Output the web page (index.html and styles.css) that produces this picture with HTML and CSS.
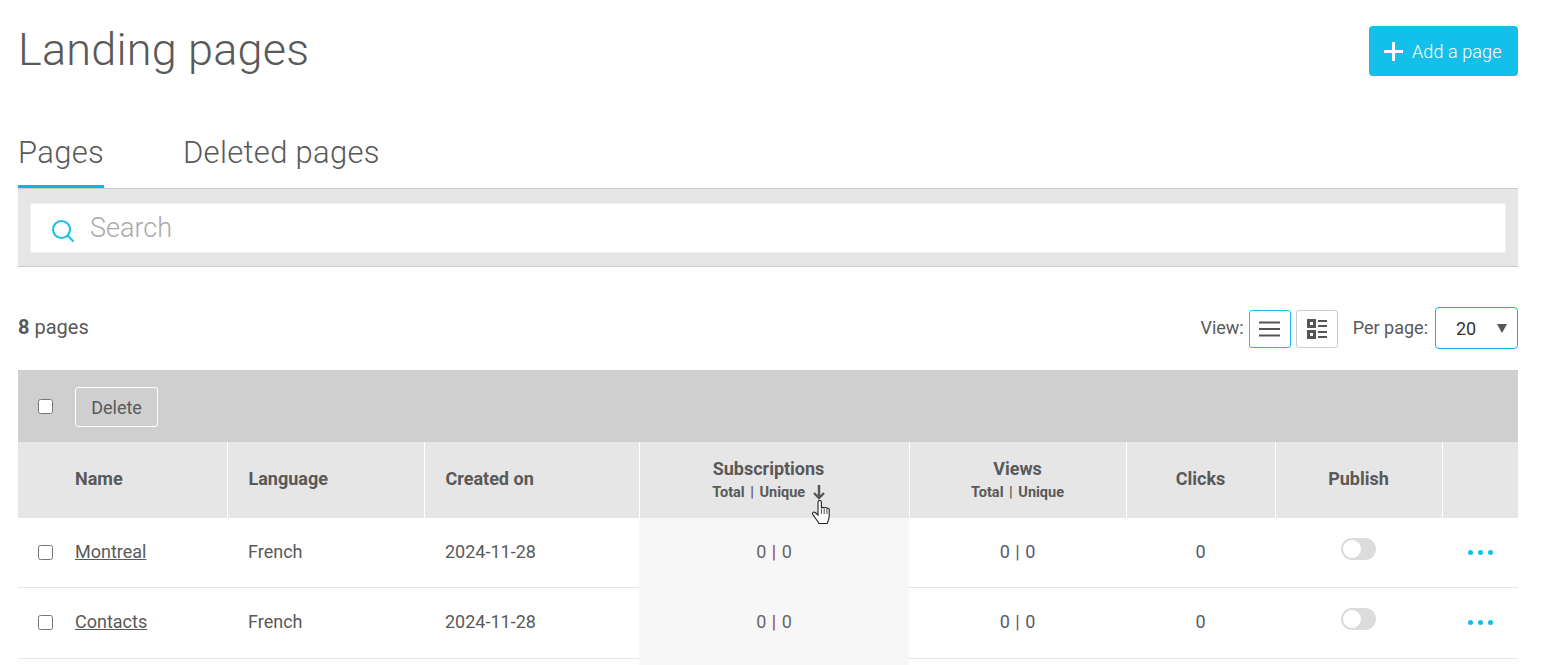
FILE: index.html
```html
<!DOCTYPE html>
<html lang="en">
<head>
    <meta charset="UTF-8">
    <meta name="viewport" content="width=device-width, initial-scale=1.0">
    <link rel="stylesheet" href="styles.css">
    <title>Landing pages</title>
</head>
<body>
    <div class="page">
        <header class="top">
            <h1>Landing pages</h1>
            <a class="add-btn">
                <svg width="19" height="19" viewBox="0 0 19 19"><path d="M9.500 0v19M0 9.500h19" stroke="#fff" stroke-width="3" fill="none"/></svg>
                <span>Add a page</span>
            </a>
        </header>

        <nav class="tabs">
            <a class="tab active">Pages</a>
            <a class="tab">Deleted pages</a>
        </nav>

        <div class="search-bar">
            <div class="search-box">
                <svg width="24" height="24" viewBox="0 0 24 24"><circle cx="10.500" cy="10.500" r="8.500" stroke="#13c0ea" stroke-width="2" fill="none"/><path d="M16.500 16.500l6 6" stroke="#13c0ea" stroke-width="2" fill="none"/></svg>
                <span class="placeholder">Search</span>
            </div>
        </div>

        <div class="list-head">
            <div class="count"><b>8</b> pages</div>
            <div class="view-tools">
                <span class="tool-label">View:</span>
                <div class="view-btn selected">
                    <svg width="21" height="16" viewBox="0 0 21 16"><path d="M0 1.500h21M0 8h21M0 14.500h21" stroke="#555" stroke-width="2" fill="none"/></svg>
                </div>
                <div class="view-btn">
                    <svg width="20" height="20" viewBox="0 0 20 20"><path d="M1.500 1.500h6v6h-6zM1.500 12.500h6v6h-6z" stroke="#555" stroke-width="3" fill="none"/><path d="M11 2h9M11 7h9M11 13h9M11 18h9" stroke="#555" stroke-width="2" fill="none"/></svg>
                </div>
                <span class="tool-label per-label">Per page:</span>
                <div class="per-select"><span>20</span><i class="caret"></i></div>
            </div>
        </div>

        <div class="bulk-bar">
            <input type="checkbox" class="check">
            <button class="delete-btn">Delete</button>
        </div>

        <table class="pages-table">
            <colgroup>
                <col class="c-name"><col class="c-lang"><col class="c-date"><col class="c-subs"><col class="c-views"><col class="c-clicks"><col class="c-pub"><col class="c-more">
            </colgroup>
            <thead>
                <tr>
                    <th class="left name-cell">Name</th>
                    <th class="left">Language</th>
                    <th class="left">Created on</th>
                    <th class="two-line sort-col">Subscriptions<small>Total | Unique
                        <svg class="sort-arrow" width="12" height="15" viewBox="0 0 12 15"><path d="M6 0v13M1 8l5 5 5-5" stroke="#555" stroke-width="2.400" fill="none"/></svg></small>
                        <svg class="hand" width="18" height="24" viewBox="0 0 18 24"><path d="M6 2.200c0-2.300 3.400-2.300 3.400 0V8.500c0-1.500 2.800-1.500 2.800 0 0-1.300 2.700-1.300 2.700.3 0-1 2.300-.9 2.300.7V16c0 3-1 5-2 7.500H7C5.500 21 2.500 17 .8 14.500c-1-1.800 1-3.200 2.400-2L6 15z" fill="#fff" stroke="#222" stroke-width="1.100"/><path d="M9.400 9v5M12.200 9v5M14.900 9v5" stroke="#222" stroke-width=".8" fill="none"/></svg>
                    </th>
                    <th class="two-line">Views<small>Total | Unique</small></th>
                    <th>Clicks</th>
                    <th>Publish</th>
                    <th></th>
                </tr>
            </thead>
            <tbody>
                <tr>
                    <td class="left name-cell"><input type="checkbox" class="check"><a class="page-link">Montreal</a></td>
                    <td class="left">French</td>
                    <td class="left">2024-11-28</td>
                    <td class="sorted">0 <em>|</em> 0</td>
                    <td class="num">0 | 0</td>
                    <td class="num">0</td>
                    <td><span class="toggle"></span></td>
                    <td><span class="dots"><i></i><i></i><i></i></span></td>
                </tr>
                <tr class="row-tall">
                    <td class="left name-cell"><input type="checkbox" class="check"><a class="page-link">Contacts</a></td>
                    <td class="left">French</td>
                    <td class="left">2024-11-28</td>
                    <td class="sorted">0 <em>|</em> 0</td>
                    <td class="num">0 | 0</td>
                    <td class="num">0</td>
                    <td><span class="toggle"></span></td>
                    <td><span class="dots"><i></i><i></i><i></i></span></td>
                </tr>
                <tr class="row-stub">
                    <td></td>
                    <td></td>
                    <td></td>
                    <td class="sorted"></td>
                    <td></td>
                    <td></td>
                    <td></td>
                    <td></td>
                </tr>
            </tbody>
        </table>
    </div>
</body>
</html>
```

FILE: styles.css
```css
html, body {
    margin: 0;
    height: 665px;
    overflow: hidden;
}
body {
    background-color: #fff;
    color: #595959;
    font-family: "Roboto", sans-serif;
    font-size: 18px;
}
.page {
    width: 1500px;
    margin-left: 18px;
}

/* title row */
.top {
    display: flex;
    justify-content: space-between;
    align-items: flex-start;
    padding-top: 26px;
    height: 100px;
    box-sizing: border-box;
}
h1 {
    margin: 0;
    font-size: 45px;
    letter-spacing: .2px;
    line-height: 48px;
    font-weight: 300;
}
.add-btn {
    display: flex;
    align-items: center;
    gap: 9px;
    height: 50px;
    width: 149px;
    box-sizing: border-box;
    padding-left: 15px;
    background-color: #13c0ea;
    color: #fff;
    border-radius: 4px;
    font-weight: 300;
    letter-spacing: .1px;
}

/* tabs */
.tabs {
    display: flex;
    gap: 79px;
    height: 88px;
    box-sizing: border-box;
    padding-top: 32px;
}
.tab {
    font-size: 31px;
    letter-spacing: .3px;
    font-weight: 300;
    line-height: 42px;
    height: 56px;
    box-sizing: border-box;
}
.tab.active {
    border-bottom: 3px solid #13b5dc;
}

/* search */
.search-bar {
    background-color: #e6e6e6;
    border-top: 1px solid #ccc;
    border-bottom: 1px solid #ccc;
    padding: 14px 12px 13px 12px;
}
.search-box {
    display: flex;
    align-items: center;
    gap: 15px;
    height: 50px;
    box-sizing: border-box;
    padding-left: 20px;
    border: 1px solid #f2f2f2;
    background-color: #fff;
}
.search-box svg {
    margin-top: 6px;
}
.placeholder {
    font-size: 27px;
    font-weight: 300;
    color: #aaa;
}

/* count and view options */
.list-head {
    display: flex;
    justify-content: space-between;
    align-items: center;
    height: 103px;
    padding-top: 19px;
    box-sizing: border-box;
}
.count {
    font-size: 20px;
    margin-bottom: 2px;
}
.count b {
    font-weight: 700;
}
.view-tools {
    display: flex;
    align-items: center;
    gap: 5px;
}
.tool-label {
    margin-bottom: 2px;
}
.view-btn {
    display: flex;
    align-items: center;
    justify-content: center;
    width: 42px;
    height: 38px;
    margin-top: 2px;
    box-sizing: border-box;
    border: 1px solid #ccc;
    border-radius: 3px;
}
.view-btn.selected {
    border-color: #13c0ea;
}
.per-label {
    margin-left: 10px;
}
.per-select {
    display: flex;
    align-items: center;
    justify-content: space-between;
    width: 83px;
    height: 42px;
    margin-left: 2px;
    box-sizing: border-box;
    padding: 0 10px 0 20px;
    border: 1px solid #13b5dc;
    border-radius: 4px;
    color: #333;
}
.caret {
    width: 0;
    height: 0;
    border-left: 5px solid transparent;
    border-right: 5px solid transparent;
    border-top: 9px solid #555;
}

/* bulk actions */
.bulk-bar {
    display: flex;
    align-items: center;
    height: 72px;
    padding-left: 20px;
    background-color: #cfcfcf;
    box-sizing: border-box;
}
.check {
    width: 15px;
    height: 15px;
    margin: 0;
    flex: none;
    vertical-align: -2px;
}
.delete-btn {
    margin-left: 22px;
    margin-top: 2px;
    width: 83px;
    height: 40px;
    background: transparent;
    border: 1px solid #fff;
    border-radius: 3px;
    color: #595959;
    font-family: "Roboto", sans-serif;
    font-size: 18px;
    padding: 0;
}

/* table */
.pages-table {
    width: 1500px;
    table-layout: fixed;
    border-collapse: collapse;
}
.c-name { width: 209px; }
.c-lang { width: 197px; }
.c-date { width: 215px; }
.c-subs { width: 270px; }
.c-views { width: 217px; }
.c-clicks { width: 149px; }
.c-pub { width: 167px; }
.c-more { width: 76px; }
th {
    position: relative;
    height: 76px;
    box-sizing: border-box;
    padding: 0 0 3px 0;
    background-color: #e6e6e6;
    border-left: 1px solid #fff;
    font-weight: 700;
    font-size: 18px;
    text-align: center;
}
th:first-child {
    border-left: 0;
}
th.two-line {
    padding-bottom: 1px;
}
th.sort-col {
    padding-right: 11px;
}
th small {
    display: block;
    font-size: 14.500px;
    font-weight: 700;
    word-spacing: 2px;
    margin-top: 5px;
}
td {
    height: 69px;
    padding: 0 0 2px 0;
    text-align: center;
    border-bottom: 1px solid #e6e6e6;
    box-sizing: border-box;
    word-spacing: 1px;
}
.row-tall td {
    height: 71px;
    padding-bottom: 3px;
}
.row-stub td {
    height: 7px;
    padding-bottom: 0;
    border-bottom: 0;
}
th.left, td.left {
    text-align: left;
    padding-left: 21px;
}
th.name-cell {
    padding-left: 57px;
}
td.name-cell {
    padding-left: 20px;
}
td.sorted {
    background-color: #f7f7f7;
    border-bottom: 0;
    color: #666;
}
td.sorted em {
    font-style: normal;
    color: #a04040;
}
td.num {
    color: #555b70;
}
.page-link {
    margin-left: 22px;
    text-decoration: underline;
}
.sort-arrow {
    vertical-align: -3px;
    margin-left: 2px;
}
.hand {
    position: absolute;
    left: 172px;
    top: 58px;
}
.toggle {
    display: inline-block;
    position: relative;
    width: 35px;
    height: 22px;
    border-radius: 11px;
    background-color: #dcdcdc;
}
.toggle::before {
    content: "";
    position: absolute;
    left: 2px;
    top: 2px;
    width: 18px;
    height: 18px;
    border-radius: 50%;
    background-color: #fff;
}
.dots {
    display: inline-flex;
    gap: 5px;
    vertical-align: 3px;
}
.dots i {
    width: 5px;
    height: 5px;
    border-radius: 50%;
    background-color: #13c0ea;
}
```
